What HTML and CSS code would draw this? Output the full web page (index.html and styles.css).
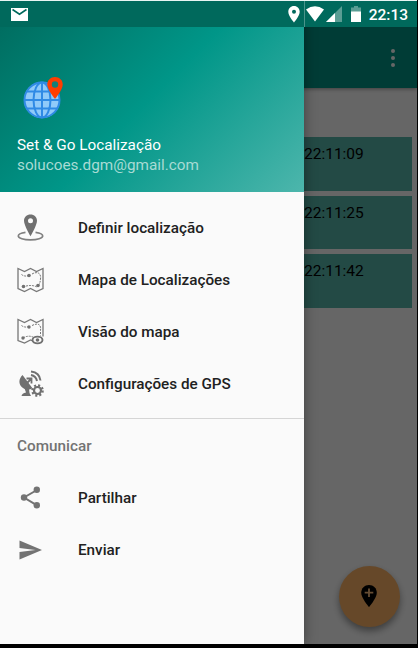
FILE: index.html
```
<!DOCTYPE html>
<html lang="pt">
<head>
    <meta charset="UTF-8">
    <meta name="viewport" content="width=device-width, initial-scale=1.0">
    <title>Set &amp; Go Localização</title>
    <link rel="stylesheet" href="styles.css">
</head>
<body>
    <div class="screen">
        <!-- Main activity -->
        <div class="app">
            <header class="toolbar">
                <button class="more-btn" aria-label="Mais"><span></span><span></span><span></span></button>
            </header>
            <main class="list">
                <div class="card">22:11:09</div>
                <div class="card">22:11:25</div>
                <div class="card">22:11:42</div>
            </main>
            <button class="fab" aria-label="Adicionar">
                <svg width="16" height="23" viewBox="0 0 16 23">
                    <path d="M8 0C3.600 0 .2 3.400 .2 7.700 .2 13 8 22 8 22s7.800-9 7.800-14.300C15.800 3.400 12.400 0 8 0z" fill="#000"/>
                    <path d="M8 3.500v8.500M3.700 7.700h8.600" stroke="#ffc080" stroke-width="1.800"/>
                </svg>
            </button>
        </div>
        <div class="scrim"></div>

        <!-- Navigation drawer -->
        <nav class="drawer">
            <div class="drawer-header">
                <svg class="logo" width="42" height="44" viewBox="0 0 42 44">
                    <circle cx="19" cy="24" r="18" fill="#90caf9"/>
                    <g fill="none" stroke="#2f8ae5" stroke-width="2">
                        <circle cx="19" cy="24" r="17.500"/>
                        <ellipse cx="19" cy="24" rx="8.500" ry="17.500"/>
                        <path d="M19 6.500v35M1.500 24h35M4 15.500h30M4 32.500h30"/>
                    </g>
                    <path d="M32 1c-4.400 0-7.700 3.300-7.700 7.600C24.300 14 32 23 32 23s7.700-9 7.700-14.400C39.700 4.300 36.400 1 32 1z" fill="#ff3d00"/>
                    <circle cx="32" cy="8.500" r="3.200" fill="#157f78"/>
                </svg>
                <div class="app-name">Set &amp; Go Localização</div>
                <div class="email">solucoes.dgm@gmail.com</div>
            </div>

            <ul class="menu">
                <li>
                    <svg width="27" height="27" viewBox="0 0 27 27">
                        <path d="M13.500 .5C9.800 .5 7 3.200 7 6.800c0 4.500 6.500 15.500 6.500 15.500S20 11.300 20 6.800C20 3.200 17.200 .5 13.500 .5zm0 3.800a2.500 2.500 0 1 1 0 5 2.500 2.500 0 0 1 0-5z" fill="#707070" fill-rule="evenodd"/>
                        <path d="M8.500 18.400C4 19 1.300 20.300 1.300 22c0 2.200 5.300 3.900 12.200 3.900s12.200-1.700 12.200-3.900c0-1.700-2.700-3-7.200-3.600" fill="none" stroke="#808080" stroke-width="1.700"/>
                    </svg>
                    <span>Definir localização</span>
                </li>
                <li>
                    <svg width="27" height="27" viewBox="0 0 27 27" fill="none" stroke="#777">
                        <path d="M1 2.500l6.500 3 6-3 6 3 6.500-3v20l-6.500 3-6-3-6 3-6.500-3z" stroke-width="1.300"/>
                        <path d="M4.500 8.500q3 2.500 7.500 1M15 8c5-3 9.500-1 8.500 5-.5 3 0 4-3 7M6 21q8-3 14 0" stroke-dasharray="2 1"/>
                        <g fill="#707070" stroke="none">
                            <circle cx="12" cy="9.500" r="1.800"/>
                            <circle cx="6.500" cy="20.500" r="1.800"/>
                            <circle cx="21" cy="19.500" r="1.800"/>
                        </g>
                    </svg>
                    <span>Mapa de Localizações</span>
                </li>
                <li>
                    <svg width="27" height="27" viewBox="0 0 27 27" fill="none" stroke="#777">
                        <path d="M15 22.800l-1.500-.8-6 3-6.500-2.500v-21l6.500 3 6-3 6 3 6.500-3v17" stroke-width="1.300"/>
                        <path d="M4.500 7.500q3 2.500 7.500 1M15 7.500c6-3 9.500-1 8.500 5v5M6 20q5-3 10-1" stroke-dasharray="2 1"/>
                        <g fill="#707070" stroke="none">
                            <circle cx="12" cy="9" r="1.700"/>
                            <circle cx="6" cy="20" r="1.700"/>
                        </g>
                        <ellipse cx="20.500" cy="22" rx="5" ry="3.400" fill="#fafafa" stroke="#707070" stroke-width="1.900"/>
                        <circle cx="20.500" cy="22" r="1.800" fill="#707070" stroke="none"/>
                    </svg>
                    <span>Visão do mapa</span>
                </li>
                <li>
                    <svg width="27" height="27" viewBox="0 0 27 27">
                        <g fill="#707070">
                            <path d="M5.500 5C1.500 9 1.500 14 5 17.200c3 2.800 7.500 3 10.500 1z"/>
                            <path d="M7 17l5 2 .5 4 1.500 3H4.500q.5-2.800 4.500-3.500z"/>
                        </g>
                        <path d="M10 13l4.500-4.500M9.500 8.500h5v5" fill="none" stroke="#707070" stroke-width="1.800"/>
                        <path d="M14 5q5 1 6 6M14 1.500q8.500 1 9.500 9" fill="none" stroke="#707070" stroke-width="2"/>
                        <circle cx="20.500" cy="20.500" r="6.100" fill="#fafafa"/>
                        <circle cx="20.500" cy="20.500" r="5.200" fill="none" stroke="#707070" stroke-width="2.200" stroke-dasharray="2.040 2.040"/>
                        <circle cx="20.500" cy="20.500" r="3.500" fill="#fafafa" stroke="#707070" stroke-width="2.200"/>
                    </svg>
                    <span>Configurações de GPS</span>
                </li>
            </ul>

            <h2 class="section-title">Comunicar</h2>
            <ul class="menu">
                <li>
                    <svg width="27" height="27" viewBox="0 0 27 27" fill="#737373">
                        <path d="M20 5L7 12.500l13 7.800" fill="none" stroke="#737373" stroke-width="2"/>
                        <circle cx="19.800" cy="4.800" r="3.200"/>
                        <circle cx="7" cy="12.500" r="3.200"/>
                        <circle cx="19.800" cy="20.300" r="3.200"/>
                    </svg>
                    <span>Partilhar</span>
                </li>
                <li>
                    <svg width="27" height="27" viewBox="0 0 27 27">
                        <path d="M2.500 3.500L25 13 2.500 22.500v-7.400l16-2.100-16-2.100z" fill="#737373"/>
                    </svg>
                    <span>Enviar</span>
                </li>
            </ul>
        </nav>

        <!-- Status bar stays over the drawer and scrim -->
        <div class="status-bar">
            <svg class="mail" width="17" height="13" viewBox="0 0 17 13">
                <path d="M0 0h17v13H0z" fill="#fff"/>
                <path d="M1.500 1.500l7 4.700 7-4.700" fill="none" stroke="#00695c" stroke-width="1.600"/>
            </svg>
            <svg class="pin" width="12" height="17" viewBox="0 0 12 17">
                <path d="M6 0C2.700 0 .3 2.600.3 5.800.3 10 6 16.500 6 16.500s5.700-6.500 5.700-10.700C11.700 2.600 9.300 0 6 0zm0 3.700a2 2 0 1 1 0 4 2 2 0 0 1 0-4z" fill="#fff" fill-rule="evenodd"/>
            </svg>
            <svg class="wifi" width="18" height="16" viewBox="0 0 18 16">
                <path d="M0 3.500Q9-3.200 18 3.500L9 15.500z" fill="#fff"/>
            </svg>
            <svg class="signal" width="16" height="16" viewBox="0 0 16 16">
                <path d="M16 0v16H0z" fill="#5a9d94"/>
                <path d="M9 7v9H0z" fill="#fff"/>
            </svg>
            <svg class="battery" width="10" height="16" viewBox="0 0 10 16">
                <path d="M3 0h4v1.500h3V6H0V1.500h3z" fill="#5a9d94"/>
                <path d="M0 5.500h10V16H0z" fill="#fff"/>
            </svg>
            <span class="clock">22:13</span>
        </div>
    </div>
</body>
</html>
```
FILE: styles.css
```
* {
    margin: 0;
    padding: 0;
    box-sizing: border-box;
}

body {
    background: #000;
    font-family: Roboto, sans-serif;
    height: 100vh;
    overflow: hidden;
}

button {
    border: none;
    background: none;
}

.screen {
    position: relative;
    width: 417px;
    height: 644px;
    border-top: 1px solid #e8f5f3;
    background: #fff;
    overflow: hidden;
}

/* Main activity */
.app {
    height: 100%;
    padding-top: 26px;
}

.toolbar {
    height: 61px;
    display: flex;
    justify-content: flex-end;
    align-items: center;
    padding-right: 22px;
    background: #009688;
    box-shadow: 0 1px 4px rgba(0, 0, 0, 0.4);
}

.more-btn {
    display: flex;
    flex-direction: column;
    gap: 3px;
}

.more-btn span {
    width: 4px;
    height: 4px;
    border-radius: 50%;
    background: #fff;
}

.list {
    display: flex;
    flex-direction: column;
    gap: 5px;
    padding: 49px 5px 0;
}

.card {
    height: 53.500px;
    padding: 8px 0 0 299px;
    background: #58b9ad;
    color: #000;
    font-size: 15.500px;
    line-height: 18px;
}

.fab {
    position: absolute;
    right: 17px;
    bottom: 17px;
    width: 61px;
    height: 61px;
    display: flex;
    justify-content: center;
    align-items: center;
    border-radius: 50%;
    background: #ffb566;
    box-shadow: 0 4px 7px rgba(0, 0, 0, 0.4);
}

.fab svg {
    margin-right: 2px;
}

.scrim {
    position: absolute;
    inset: 0;
    background: rgba(0, 0, 0, 0.6);
}

/* Navigation drawer */
.drawer {
    position: absolute;
    top: 0;
    left: 0;
    width: 304px;
    height: 100%;
    background: #fafafa;
    box-shadow: 0 0 12px rgba(0, 0, 0, 0.4);
}

.drawer-header {
    height: 191px;
    padding: 75px 17px 0;
    background: linear-gradient(135deg, #00695c 0%, #009688 50%, #4db6ac 100%);
    color: #fff;
}

.logo {
    display: block;
    margin: 0 0 15px 6px;
}

.app-name {
    font-size: 15.300px;
    line-height: 20px;
}

.email {
    color: #a8dbd4;
    font-size: 15.300px;
    line-height: 21px;
}

.menu {
    list-style: none;
}

.drawer-header + .menu {
    padding: 9px 0;
    border-bottom: 1px solid #d5d5d5;
}

.menu li {
    height: 52px;
    display: flex;
    align-items: center;
    gap: 34px;
    padding-left: 17px;
    color: #212121;
    font-size: 15.250px;
    font-weight: 500;
}

.drawer-header + .menu span {
    padding-top: 2px;
}

.section-title {
    height: 53px;
    padding-left: 17px;
    color: #737373;
    font-size: 15.300px;
    font-weight: 500;
    line-height: 54px;
}

/* Status bar */
.status-bar {
    position: absolute;
    top: 0;
    left: 0;
    width: 100%;
    height: 26px;
    display: flex;
    align-items: center;
    padding: 0 9px 0 11px;
    background: linear-gradient(90deg, #00695c 304px, #4a948b 304px, #4a948b 305px, #00695c 305px);
    color: #fff;
}

.pin {
    margin-left: auto;
}

.wifi {
    margin-left: 6px;
}

.signal {
    margin-left: 2px;
}

.battery {
    margin-left: 9px;
}

.clock {
    margin-left: 8px;
    padding-top: 2px;
    font-size: 15.500px;
    font-weight: 500;
}
```
